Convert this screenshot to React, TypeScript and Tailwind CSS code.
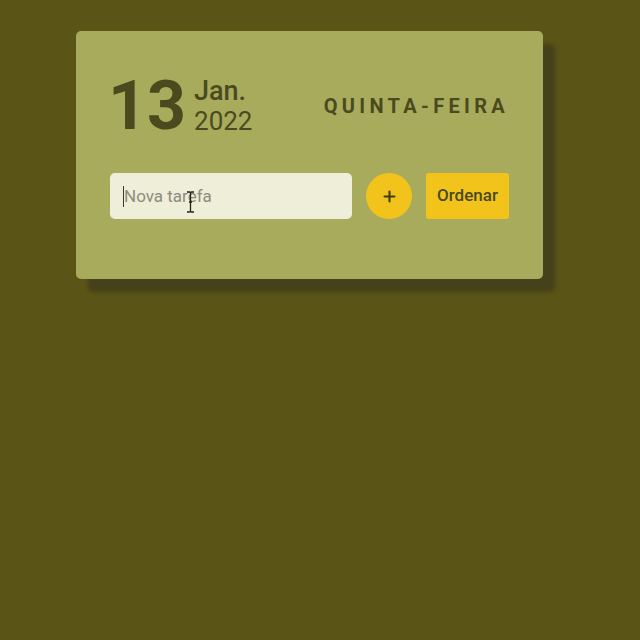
import { Plus } from 'lucide-react'

export default function App() {
  return (
    <div className="min-h-screen w-full bg-[#5b5417] pt-[31px] font-['Roboto',sans-serif]">
      <div className="ml-[76px] h-[248px] w-[467px] rounded-[5px] bg-[#a8aa5c] px-[34px] pt-[41px] text-[#4b4a1f] shadow-[12px_13px_4px_#45411a]">
        <div className="flex items-center justify-between">
          <div className="flex items-center gap-[8px]">
            <span className="-ml-[2px] text-[68px] font-bold leading-none">13</span>
            <div className="flex flex-col leading-none">
              <span className="text-[27px] font-medium leading-[30px]">Jan.</span>
              <span className="text-[26px] leading-[30px]">2022</span>
            </div>
          </div>
          <span className="text-[20px] font-bold tracking-[4.3px]">QUINTA-FEIRA</span>
        </div>

        <div className="mt-[33px] flex items-center gap-[14px]">
          <div className="relative">
            <input
              type="text"
              placeholder="Nova tarefa"
              className="h-[46px] w-[242px] rounded-[5px] bg-[#eeeed9] px-[14px] text-[17px] text-[#4b4a1f] placeholder:text-[#8c8c7c] outline-none"
            />
            <span className="pointer-events-none absolute left-[13px] top-[13px] h-[21px] w-px bg-[#3a3a2a]" />
            <svg
              className="pointer-events-none absolute left-[76px] top-[18px]"
              width="9"
              height="22"
              viewBox="0 0 9 22"
              fill="none"
              stroke="#22221a"
              strokeWidth="1.3"
            >
              <path d="M1 1h2.5c.6 0 1 .4 1 1v18c0 .6-.4 1-1 1H1M8 1H5.5c-.6 0-1 .4-1 1M8 21H5.5c-.6 0-1-.4-1-1M3 11h3" />
            </svg>
          </div>
          <button className="flex h-[46px] w-[46px] items-center justify-center rounded-full bg-[#f2c41b] text-[#3f3d18]">
            <Plus size={17} strokeWidth={3} />
          </button>
          <button className="h-[46px] w-[83px] rounded-[3px] bg-[#f2c41b] text-[17px] font-medium text-[#4b4a1f]">
            Ordenar
          </button>
        </div>
      </div>
    </div>
  )
}
